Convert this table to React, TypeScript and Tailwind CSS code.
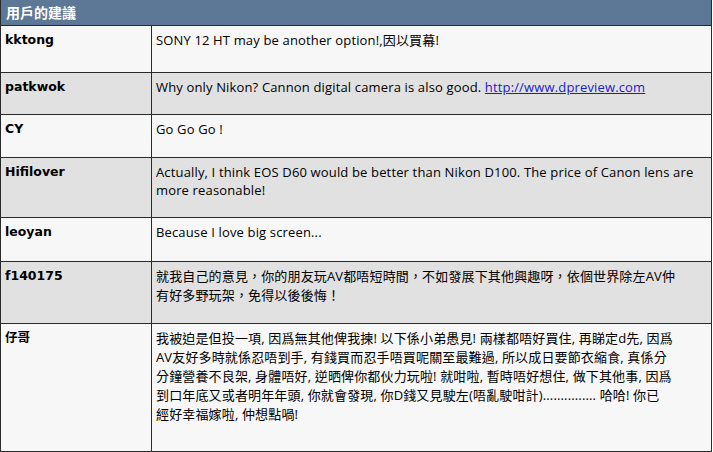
import React from 'react';

type Row = {
  name: string;
  h: string;
  bg: string;
  body: React.ReactNode;
};

const rows: Row[] = [
  {
    name: "kktong",
    h: "h-[47px]",
    bg: "bg-[#f7f7f7]",
    body: "SONY 12 HT may be another option!,因以買幕!",
  },
  {
    name: "patkwok",
    h: "h-[42px]",
    bg: "bg-[#e1e1e1]",
    body: (
      <>
        Why only Nikon? Cannon digital camera is also good.{' '}
        <a href="#" className="text-[#1a1ad0] underline">http://www.dpreview.com</a>
      </>
    ),
  },
  {
    name: "CY",
    h: "h-[43px]",
    bg: "bg-[#f7f7f7]",
    body: "Go Go Go !",
  },
  {
    name: "Hifilover",
    h: "h-[60px]",
    bg: "bg-[#e1e1e1]",
    body: (
      <>
        Actually, I think EOS D60 would be better than Nikon D100. The price of Canon lens are
        <br />
        more reasonable!
      </>
    ),
  },
  {
    name: "leoyan",
    h: "h-[44px]",
    bg: "bg-[#f7f7f7]",
    body: "Because I love big screen...",
  },
  {
    name: "f140175",
    h: "h-[62px]",
    bg: "bg-[#e1e1e1]",
    body: (
      <span className="leading-[19px]">
        就我自己的意見，你的朋友玩AV都唔短時間，不如發展下其他興趣呀，依個世界除左AV仲
        <br />
        有好多野玩架，免得以後後悔！
      </span>
    ),
  },
  {
    name: "仔哥",
    h: "h-[127px]",
    bg: "bg-[#f7f7f7]",
    body: (
      <span className="leading-[19px]">
        我被迫是但投一項, 因爲無其他俾我揀! 以下係小弟愚見! 兩樣都唔好買住, 再睇定d先, 因爲
        <br />
        AV友好多時就係忍唔到手, 有錢買而忍手唔買呢關至最難過, 所以成日要節衣縮食, 真係分
        <br />
        分鐘營養不良架, 身體唔好, 逆晒俾你都伙力玩啦! 就咁啦, 暫時唔好想住, 做下其他事, 因爲
        <br />
        到口年底又或者明年年頭, 你就會發現, 你D錢又見駛左(唔亂駛咁計)............... 哈哈! 你已
        <br />
        經好幸福嫁啦, 仲想點喎!
      </span>
    ),
  },
];

export default function App() {
  return (
    <div className="w-[713px] h-[452px] bg-white">
      <div className="w-[712px] border-x border-b border-[#2a2a2a] font-['Open_Sans','Noto_Sans_CJK_TC',sans-serif] text-[13px] text-black">
        <div className="h-[26px] bg-[#5d7896] border-b border-[#2a2a2a] px-[5px] flex items-center">
          <span className="text-white font-bold text-[14px] font-['Noto_Sans_CJK_TC',sans-serif]">用戶的建議</span>
        </div>
        {rows.map((row, i) => (
          <div
            key={i}
            className={`flex ${row.h} ${row.bg} ${i < rows.length - 1 ? 'border-b border-[#2a2a2a]' : ''}`}
          >
            <div className="w-[151px] shrink-0 border-r border-[#2a2a2a] px-[4px] pt-[5px] font-bold text-[12.5px] font-['DejaVu_Sans','Noto_Sans_CJK_TC',sans-serif] leading-[18px]">
              {row.name}
            </div>
            <div className="flex-1 px-[4px] pt-[5px] leading-[18px] tracking-[0.15px]">{row.body}</div>
          </div>
        ))}
      </div>
    </div>
  );
}
